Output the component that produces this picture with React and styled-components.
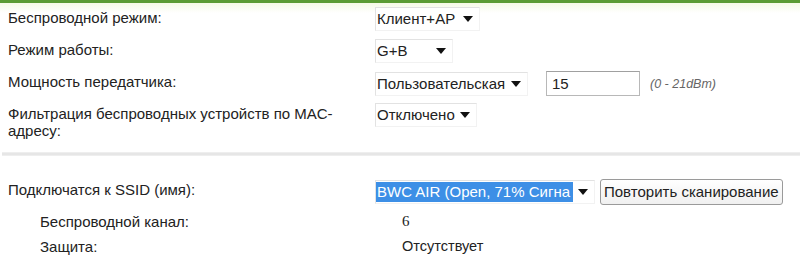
import React from 'react';
import styled, { createGlobalStyle } from 'styled-components';

const GlobalStyle = createGlobalStyle`
    body {
        margin: 0;
        background: #fff;
        font-family: "Liberation Sans", Arial, sans-serif;
        font-size: 15px;
        color: #222;
    }
`

const Page = styled.div`
    border-top: 3px solid #5b9b34;
    background: linear-gradient(#f6fae6 0, #ffffff 10px);
    width: 800px;
    height: 260px;
    overflow: hidden;
`

const Row = styled.div`
    display: grid;
    grid-template-columns: ${p => 367 - (p.$indent || 0)}px 1fr;
    align-items: start;
    padding-left: ${p => 8 + (p.$indent || 0)}px;
    min-height: ${p => p.$h || 32}px;
`

const Label = styled.div`
    line-height: 17px;
    padding-top: ${p => p.$top || 6}px;
    padding-right: 20px;
`

const Controls = styled.div`
    display: flex;
    align-items: center;
    gap: ${p => p.$gap || 18}px;
    padding-top: 4px;
`

const Select = styled.div`
    box-sizing: border-box;
    width: ${p => p.$w}px;
    height: 24px;
    display: flex;
    align-items: center;
    justify-content: space-between;
    padding: 0 6px 0 0;
    border: 1px solid #e2e2e2;
    border-right-color: #f2f2f2;
    border-bottom-color: #f2f2f2;
    background: #fff;
    white-space: nowrap;
`

const Selected = styled.span`
    background: ${p => p.$hl ? '#3d8fe6' : 'transparent'};
    color: ${p => p.$hl ? '#fff' : '#222'};
    min-width: ${p => p.$hl ? '197px' : '0'};
    box-sizing: border-box;
    line-height: 20px;
    padding-left: 1px;
`

const Input = styled.div`
    box-sizing: border-box;
    width: 94px;
    height: 25px;
    border: 1px solid #b8b8b8;
    border-top-color: #a0a0a0;
    padding-left: 5px;
    line-height: 23px;
`

const Hint = styled.span`
    font-style: italic;
    font-size: 12.5px;
    color: #666;
    margin-left: -8px;
`

const Divider = styled.div`
    height: 4px;
    margin: 13px 0 19px 2px;
    background: linear-gradient(#f2f2f2, #e2e2e2, #f2f2f2);
`

const Button = styled.div`
    box-sizing: border-box;
    height: 26px;
    padding: 0 3px;
    border: 1px solid #9a9a9a;
    border-radius: 3px;
    background: linear-gradient(#ffffff, #f0f0f0);
    line-height: 24px;
    white-space: nowrap;
`

const Value = styled.div`
    padding-top: ${p => p.$top || 6}px;
    padding-left: 27px;
    line-height: 17px;
    font-family: ${p => p.$serif ? '"Liberation Serif", serif' : '"Liberation Sans", Arial, sans-serif'};
    font-size: ${p => p.$serif ? 15 : 14.5}px;
`

const Arrow = () => (
    <svg width="10" height="6" viewBox="0 0 10 6"><path d="M0 0h10L5 6z" fill="#111" /></svg>
)

export default function App() {
    return (
        <Page>
            <GlobalStyle />
            <Row>
                <Label>Беспроводной режим:</Label>
                <Controls>
                    <Select $w={105}><Selected>Клиент+AP</Selected><Arrow /></Select>
                </Controls>
            </Row>
            <Row>
                <Label>Режим работы:</Label>
                <Controls>
                    <Select $w={78}><Selected>G+B</Selected><Arrow /></Select>
                </Controls>
            </Row>
            <Row>
                <Label>Мощность передатчика:</Label>
                <Controls>
                    <Select $w={153}><Selected>Пользовательская</Selected><Arrow /></Select>
                    <Input>15</Input>
                    <Hint>(0 - 21dBm)</Hint>
                </Controls>
            </Row>
            <Row>
                <Label>Фильтрация беспроводных устройств по MAC-<wbr />адресу:</Label>
                <Controls>
                    <Select $w={102}><Selected>Отключено</Selected><Arrow /></Select>
                </Controls>
            </Row>
            <Divider />
            <Row>
                <Label>Подключатся к SSID (имя):</Label>
                <Controls $gap={5}>
                    <Select $w={220}><Selected $hl>BWC AIR (Open, 71% Сигна</Selected><Arrow /></Select>
                    <Button>Повторить сканирование</Button>
                </Controls>
            </Row>
            <Row $indent={32} $h={25}>
                <Label>Беспроводной канал:</Label>
                <Value $serif>6</Value>
            </Row>
            <Row $indent={32} $h={25}>
                <Label>Защита:</Label>
                <Value>Отсутствует</Value>
            </Row>
        </Page>
    );
}
